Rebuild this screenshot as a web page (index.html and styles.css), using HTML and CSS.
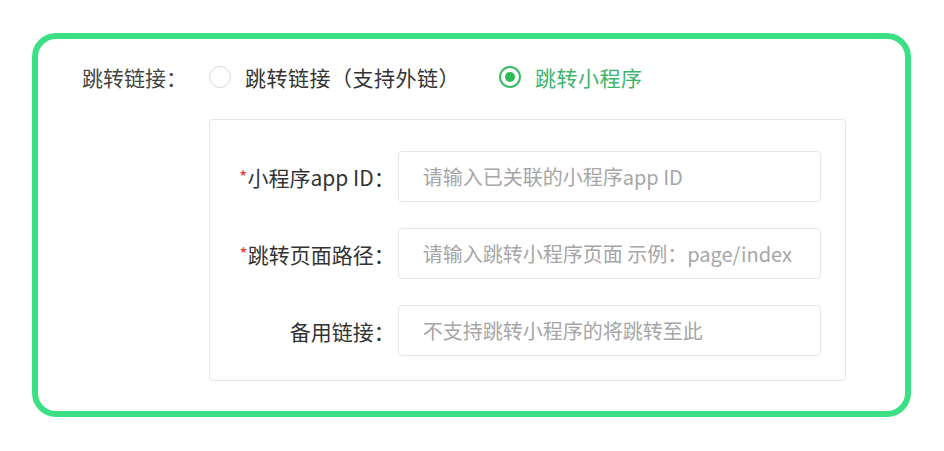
FILE: index.html
```html
<!DOCTYPE html>
<html>
  <head>
    <meta charset="UTF-8">
    <title>跳转链接</title>
    <link rel="stylesheet" href="styles.css">
  </head>
  <body>
    <div class="panel">
      <div class="link-row">
        <span class="link-label">跳转链接：</span>
        <label class="radio">
          <input type="radio" name="linkType" value="url">
          <span class="radio-dot"></span>
          <span class="radio-text">跳转链接（支持外链）</span>
        </label>
        <label class="radio">
          <input type="radio" name="linkType" value="mini" checked>
          <span class="radio-dot"></span>
          <span class="radio-text">跳转小程序</span>
        </label>
      </div>

      <div class="mini-box">
        <div class="form-row">
          <label class="form-label"><span class="required">*</span>小程序app ID：</label>
          <input type="text" class="form-input" placeholder="请输入已关联的小程序app ID">
        </div>
        <div class="form-row">
          <label class="form-label"><span class="required">*</span>跳转页面路径：</label>
          <input type="text" class="form-input" placeholder="请输入跳转小程序页面 示例：page/index">
        </div>
        <div class="form-row">
          <label class="form-label">备用链接：</label>
          <input type="text" class="form-input" placeholder="不支持跳转小程序的将跳转至此">
        </div>
      </div>
    </div>
  </body>
</html>
```

FILE: styles.css
```css
body {
  margin: 0;
  background-color: #FFFFFF;
  font-family: "Noto Sans CJK SC", "Liberation Sans", sans-serif;
  color: #333333;
}

.panel {
  width: 879px;
  height: 384px;
  margin: 33px 0 0 32px;
  box-sizing: border-box;
  border: 6px solid #3BDF84;
  border-radius: 24px;
  padding: 26px 0 0 44px;
}

.link-row {
  display: flex;
  align-items: center;
  height: 24px;
  font-size: 21px;
}

.link-label {
  width: 127px;
  color: #444444;
}

.radio {
  display: flex;
  align-items: center;
  margin-right: 39px;
  cursor: pointer;
}

.radio input {
  display: none;
}

.radio-dot {
  width: 22px;
  height: 22px;
  box-sizing: border-box;
  border: 1px solid #D9D9D9;
  border-radius: 50%;
  margin-right: 14px;
  display: flex;
  align-items: center;
  justify-content: center;
}

.radio input:checked + .radio-dot {
  border: 2px solid #3DBA66;
}

.radio input:checked + .radio-dot::after {
  content: "";
  width: 10px;
  height: 10px;
  border-radius: 50%;
  background-color: #2EBB52;
}

.radio-text {
  color: #333333;
  line-height: 24px;
  letter-spacing: 0.5px;
}

.radio input:checked ~ .radio-text {
  color: #3DB56A;
}

.mini-box {
  width: 637px;
  height: 262px;
  margin: 30px 0 0 127px;
  box-sizing: border-box;
  border: 1px solid #E6E6E6;
  border-radius: 4px;
  padding: 31px 24px 0 0;
  display: flex;
  flex-direction: column;
  gap: 26px;
}

.form-row {
  display: flex;
  align-items: center;
  gap: 3px;
}

.form-label {
  width: 185px;
  text-align: right;
  font-size: 21px;
  color: #333333;
}

.required {
  color: #E53935;
  font-size: 18px;
  vertical-align: 2px;
}

.form-input {
  width: 424px;
  height: 51px;
  box-sizing: border-box;
  border: 1px solid #E6E6E6;
  border-radius: 4px;
  padding: 0 24px;
  font-family: "Noto Sans CJK SC", "Liberation Sans", sans-serif;
  font-size: 20px;
  color: #333333;
  outline: none;
}

.form-input::placeholder {
  color: #A6A6A6;
}
```
